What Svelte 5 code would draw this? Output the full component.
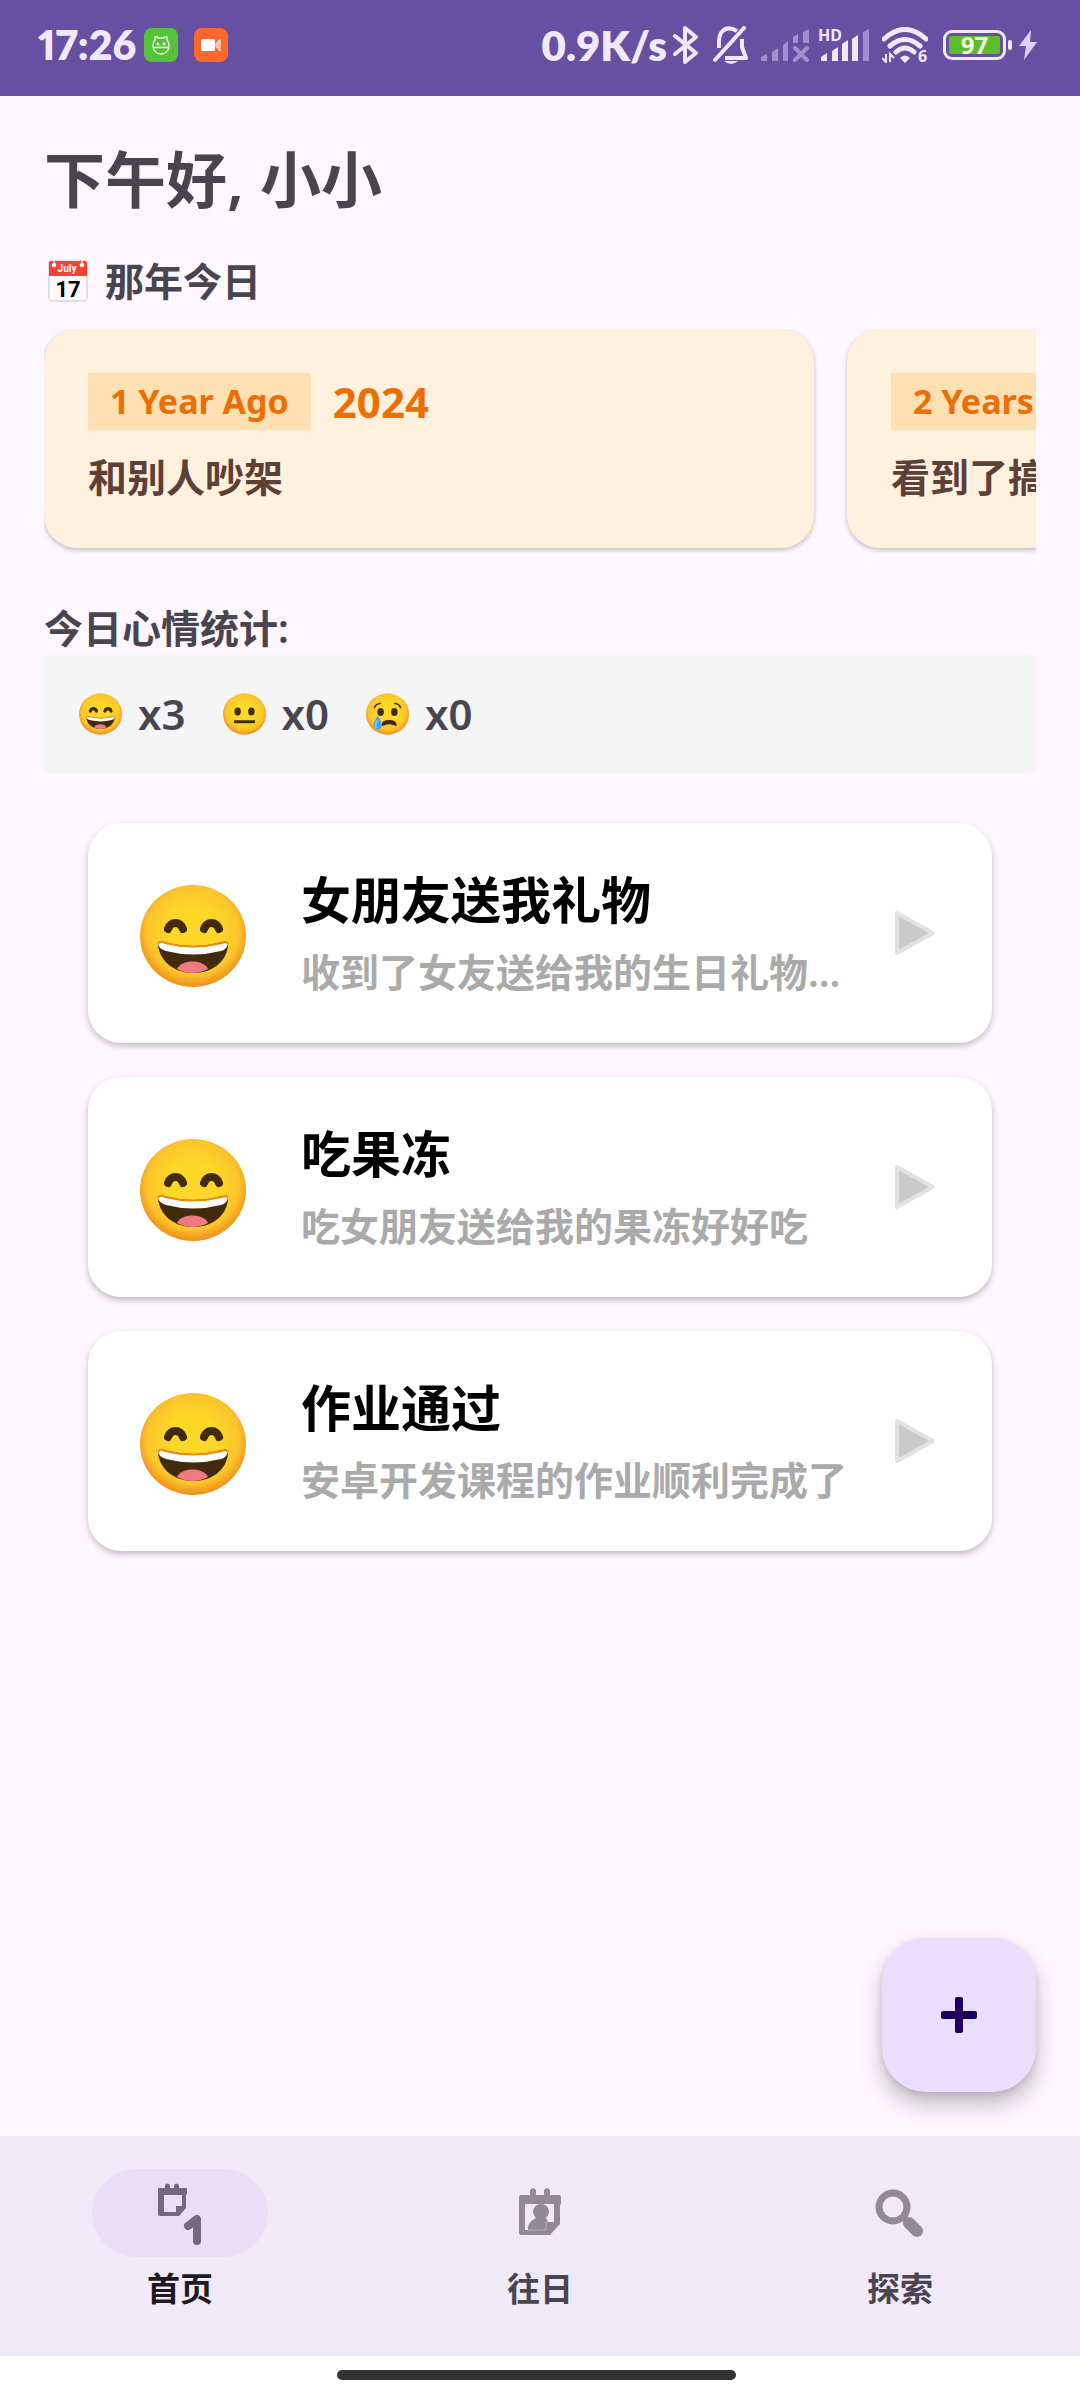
<script>
  const memories = [
    { ago: '1 Year Ago', year: '2024', text: '和别人吵架' },
    { ago: '2 Years Ago', year: '2023', text: '看到了搞笑的视频' }
  ];
  const moods = [
    { kind: 'happy', count: 3, label: '开心' },
    { kind: 'neutral', count: 0, label: '平静' },
    { kind: 'sad', count: 0, label: '难过' }
  ];
  const entries = [
    { title: '女朋友送我礼物', text: '收到了女友送给我的生日礼物…' },
    { title: '吃果冻', text: '吃女朋友送给我的果冻好好吃' },
    { title: '作业通过', text: '安卓开发课程的作业顺利完成了' }
  ];
  const tabs = [
    { id: 'home', label: '首页' },
    { id: 'past', label: '往日' },
    { id: 'search', label: '探索' }
  ];
  let active = $state('home');
</script>

{#snippet face(kind)}
  <svg class="face" viewBox="0 0 106 102" aria-hidden="true">
    <defs>
      <radialGradient id="skin" cx="50%" cy="45%" r="54%">
        <stop offset="0.4" stop-color="#fdd828" />
        <stop offset="0.8" stop-color="#fbc52b" />
        <stop offset="1" stop-color="#f0921c" />
      </radialGradient>
    </defs>
    <ellipse cx="53" cy="51" rx="53" ry="51" fill="url(#skin)" />
    {#if kind === 'happy'}
      <path d="M28 44c3-8 12-8 15 0M64 44c3-8 12-8 15 0" fill="none" stroke="#422b0d" stroke-width="8" stroke-linecap="round" />
      <path d="M18 60q0-5 6-3q29 8 58 0q7-2 6 4c-2 17-17 27-35 27S20 77 18 60z" fill="#422b0d" />
      <path d="M37 84c4-10 27-10 31 0q-15 8-31 0z" fill="#ee7a7f" />
      <path d="M18 59q2-4 7-1q28 7 57 0q5-2 6 1q-2 6-7 7q-28 7-55 0q-7-2-8-7z" fill="#fff" />
      <path d="M18 59q2-4 7-1q28 7 57 0q5-2 6 1" fill="none" stroke="#e88a14" stroke-width="2" />
    {:else if kind === 'neutral'}
      <ellipse cx="36" cy="45" rx="8" ry="10" fill="#422b0d" />
      <ellipse cx="70" cy="45" rx="8" ry="10" fill="#422b0d" />
      <path d="M30 70h46" stroke="#422b0d" stroke-width="7" stroke-linecap="round" />
    {:else}
      <ellipse cx="36" cy="46" rx="8" ry="10" fill="#422b0d" />
      <ellipse cx="70" cy="46" rx="8" ry="10" fill="#422b0d" />
      <path d="M21 35q3-9 14-10M85 35q-3-9-14-10" fill="none" stroke="#422b0d" stroke-width="4" stroke-linecap="round" />
      <path d="M40 79q0-12 17-12t17 12q-17-9-34 0z" fill="#422b0d" stroke="#422b0d" stroke-width="3" stroke-linejoin="round" />
      <path d="M29 55c6 12 11 18 10 25-2 12-18 12-20 0-1-7 4-13 10-25z" fill="#3aa8e8" />
      <path d="M27 68c-4 6-4 12-2 16" fill="none" stroke="#81d4fa" stroke-width="4" stroke-linecap="round" />
    {/if}
  </svg>
{/snippet}

<div class="screen">
  <header class="status">
    <div class="group left">
      <time>17:26</time>
      <svg class="app" viewBox="0 0 34 34" aria-hidden="true">
        <rect width="34" height="34" rx="8" fill="#55c238" />
        <path d="M11 12l0-3q2-1 3 1h6q1-2 3-1v3q2 2 2 6c0 5-4 8-8 8s-8-3-8-8q0-4 2-6zM9 19.500h16" fill="none" stroke="#f2ffe9" stroke-width="1.300" />
        <path d="M14 14l1.500 2-1.500 2-1.500-2zM20 14l1.500 2-1.500 2-1.500-2z" fill="#f2ffe9" />
      </svg>
      <svg class="app second" viewBox="0 0 34 34" aria-hidden="true">
        <rect width="34" height="34" rx="8" fill="#ff672c" />
        <rect x="7" y="11" width="14" height="12" rx="1.500" fill="#fff" />
        <path d="M21 16l4-5h2v12h-2l-4-5z" fill="#ffc3a8" />
      </svg>
    </div>
    <div class="group right">
      <span class="speed">0.9K/s</span>
      <svg class="bt" viewBox="0 0 26 38" aria-hidden="true">
        <path d="M2 10l21 17-11 9V2l11 9L2 28" fill="none" stroke="#f0e9fb" stroke-width="4" stroke-linejoin="round" stroke-linecap="round" />
      </svg>
      <svg class="bell" viewBox="0 0 36 38" aria-hidden="true">
        <path d="M24 5Q14-1 8 7q-2 3-2 8v7M29 13v8l4 11H12" fill="none" stroke="#f0e9fb" stroke-width="4" stroke-linejoin="round" />
        <path d="M2 34L31 2" stroke="#f0e9fb" stroke-width="4" stroke-linecap="round" />
        <path d="M11 35h14q-7 6-14 0z" fill="#f0e9fb" />
      </svg>
      <svg class="sig" viewBox="0 0 48 34" aria-hidden="true">
        <path d="M0 33v-4l6-3v7zM11 33V24l6-4v13zM22 33V17l5-4v20zM32 15V9l5-3v9zM42 15V4l6-3v14z" fill="#a28fcd" />
        <path d="M34 20l12 12M46 20L34 32" stroke="#a28fcd" stroke-width="4" stroke-linecap="round" />
      </svg>
      <div class="hd">
        <span class="tiny">HD</span>
        <svg viewBox="0 0 52 34" aria-hidden="true">
          <path d="M3 33v-4l6-4v8zM14 33V23l6-4v14zM24 33V16l6-4v21zM34 33V11l6-4v26z" fill="#f0e9fb" />
          <path d="M45 33V4l6-3v32z" fill="#a28fcd" />
        </svg>
      </div>
      <div class="wifi">
        <svg viewBox="0 0 46 36" aria-hidden="true">
          <path d="M2 12q21-19 42 0M8 19q15-13 30 0M14 25q9-8 18 0" fill="none" stroke="#f0e9fb" stroke-width="5" stroke-linecap="round" />
          <path d="M18 31q5-5 10 0l-5 5z" fill="#f0e9fb" />
          <path d="M0 31l4 4v-8M8 35v-8l4 4" fill="none" stroke="#f0e9fb" stroke-width="2" />
        </svg>
        <span class="tiny">6</span>
      </div>
      <div class="battery"><span class="level">97</span></div>
      <svg class="bolt" viewBox="0 0 18 30" aria-hidden="true">
        <path d="M12 0L0 16h7L5 30 18 12h-7z" fill="#ddd2f2" />
      </svg>
    </div>
  </header>

  <main>
    <h1>下午好, 小小</h1>

    <h2 class="memory-title">
      <svg viewBox="0 0 40 42" aria-hidden="true">
        <rect x="1" y="1" width="38" height="40" rx="2" fill="#fafafa" stroke="#c4c4c4" />
        <path d="M1 16V3q0-2 2-2h34q2 0 2 2v13z" fill="#f44336" />
        <path d="M6 0v5M34 0v5" stroke="#f5d5d5" stroke-width="1.500" />
        <circle cx="6" cy="5" r="2.300" fill="#fff" /><circle cx="34" cy="5" r="2.300" fill="#fff" />
        <text x="19" y="12" text-anchor="middle" class="month">July</text>
        <text x="20" y="37" text-anchor="middle" class="day">17</text>
      </svg>
      那年今日
    </h2>

    <div class="memories">
      {#each memories as m}
        <article class="memory">
          <div class="memory-head"><span class="chip">{m.ago}</span><span class="year">{m.year}</span></div>
          <p>{m.text}</p>
        </article>
      {/each}
    </div>

    <h2 class="stats-title">今日心情统计:</h2>
    <div class="stats">
      {#each moods as mood}
        <span class="mood" aria-label={mood.label}>{@render face(mood.kind)}x{mood.count}</span>
      {/each}
    </div>

    <div class="entries">
      {#each entries as e}
        <button class="entry">
          {@render face('happy')}
          <span class="entry-text">
            <span class="entry-title">{e.title}</span>
            <span class="entry-sub">{e.text}</span>
          </span>
          <svg class="play" viewBox="0 0 40 44" aria-hidden="true">
            <path d="M2 2l36 20L2 42z" fill="#cacaca" stroke="#e2e2e2" stroke-width="4" stroke-linejoin="round" />
          </svg>
        </button>
      {/each}
    </div>

    <button class="fab" aria-label="添加">
      <svg viewBox="0 0 36 36" aria-hidden="true">
        <rect x="14" width="8" height="36" rx="2" fill="#21005d" />
        <rect y="14" width="36" height="8" rx="2" fill="#21005d" />
      </svg>
    </button>
  </main>

  <nav>
    {#each tabs as tab}
      <button class="tab" class:active={active === tab.id} onclick={() => (active = tab.id)}>
        <span class="pill">
          <svg viewBox="0 0 66 66" aria-hidden="true">
            {#if tab.id === 'home'}
              <path fill="#73697f" fill-rule="evenodd" d="M11 9q0-1 1-1h6V5q2-3 5 0v3h4V5q2-3 5 0v3h7q1 0 1 1v5l-1 1v13l-7 8H13q-2 0-2-2zM17 15v17h12v-6h6V15z" />
              <path d="M41 46l9-7v22" fill="none" stroke="#73697f" stroke-width="8" stroke-linejoin="round" stroke-linecap="round" />
            {:else if tab.id === 'past'}
              <path fill="#918997" fill-rule="evenodd" d="M12 17q0-2 2-2h9V10q3-4 6 0v5h8V10q3-4 6 0v5h9q2 0 2 2v7l-1 1v19L43 55H14q-2 0-2-2zM18 24v26h3c0-7 3-9 8-12a8 8 0 1 1 10 0l2 4h6V24z" />
              <path d="M21 50h18v-8h2" fill="none" stroke="#b6aebd" stroke-width="1" />
            {:else}
              <circle cx="26" cy="27" r="14" fill="none" stroke="#918997" stroke-width="7" />
              <path d="M38 39l3 3" stroke="#918997" stroke-width="6" />
              <path d="M42 43l8 8" stroke="#918997" stroke-width="12" stroke-linecap="round" />
            {/if}
          </svg>
        </span>
        {tab.label}
      </button>
    {/each}
  </nav>
  <footer><span></span></footer>
</div>

<style>
  :global(body) {
    margin: 0;
  }
  .screen {
    min-height: 100vh;
    display: flex;
    flex-direction: column;
    background: #fef7ff;
    color: #49454f;
    font-family: 'Noto Sans', 'Noto Sans CJK SC', sans-serif;
    font-size: 39px;
    font-weight: 600;
  }
  h1, h2, p {
    margin: 0;
  }
  button {
    border: 0;
    padding: 0;
    font: inherit;
    color: inherit;
    background: none;
    text-align: left;
  }
  svg {
    display: block;
    flex: none;
  }
  .status {
    height: 96px;
    padding: 0 43px 6px 38px;
    box-sizing: border-box;
    display: flex;
    align-items: center;
    justify-content: space-between;
    background: #674fa1;
    color: #f0e9fb;
    font-family: Lato, sans-serif;
    font-size: 42px;
    font-weight: 800;
    line-height: 48px;
  }
  .status time {
    font-size: 41px;
    font-variant-numeric: proportional-nums;
  }
  .group {
    display: flex;
    align-items: center;
  }
  .left {
    gap: 8px;
  }
  .app {
    width: 34px;
    height: 34px;
  }
  .second {
    margin-left: 8px;
  }
  .bt {
    width: 26px;
    height: 38px;
    margin: 0 14px 0 6px;
  }
  .bell {
    width: 36px;
    height: 38px;
  }
  .sig {
    width: 48px;
    height: 34px;
    margin-left: 12px;
  }
  .hd {
    position: relative;
    width: 52px;
    margin-left: 9px;
  }
  .hd svg {
    width: 52px;
    height: 34px;
  }
  .wifi {
    position: relative;
    width: 46px;
    margin: 0 15px 0 12px;
  }
  .wifi svg {
    width: 46px;
    height: 36px;
  }
  .tiny {
    position: absolute;
    left: 0;
    top: -4px;
    font: 700 16px/22px 'Noto Sans', sans-serif;
  }
  .wifi .tiny {
    left: 36px;
    top: 18px;
  }
  .battery {
    position: relative;
    box-sizing: border-box;
    width: 63px;
    height: 30px;
    margin-right: 7px;
    padding: 3px;
    border: 3px solid #f0e9fb;
    border-radius: 9px;
  }
  .battery::after {
    content: '';
    position: absolute;
    right: -9px;
    top: 7px;
    width: 4px;
    height: 10px;
    border-radius: 2px;
    background: #f0e9fb;
  }
  .level {
    display: flex;
    align-items: center;
    justify-content: center;
    height: 18px;
    border-radius: 2px;
    background: #5bbd2b;
    color: #f0ffe6;
    font: 700 24px/28px 'Noto Sans', sans-serif;
  }
  .bolt {
    width: 18px;
    height: 30px;
    margin-left: 6px;
  }
  main {
    flex: 1;
    position: relative;
    padding: 44px 44px 0;
  }
  h1 {
    font-size: 61px;
    line-height: 80px;
    font-weight: 600;
  }
  h2 {
    font-size: 39px;
    line-height: 56px;
    font-weight: 600;
  }
  .memory-title {
    display: flex;
    align-items: center;
    gap: 17px;
    margin: 33px 0 20px;
    padding-left: 4px;
    font-weight: 700;
  }
  .memory-title svg {
    width: 40px;
    height: 42px;
  }
  .month {
    font: 700 10px Roboto, sans-serif;
    fill: #fff;
  }
  .day {
    font: 700 22px Roboto, sans-serif;
    fill: #000;
  }
  .memories {
    display: flex;
    gap: 33px;
    overflow: hidden;
    padding-bottom: 11px;
  }
  .memory {
    flex: 0 0 770px;
    box-sizing: border-box;
    padding: 44px;
    border-radius: 33px;
    background: #fff1de;
    box-shadow: 0 2px 5px rgb(0 0 0 / 0.25);
    color: #5d4037;
  }
  .memory-head {
    display: flex;
    align-items: center;
    gap: 22px;
    margin-bottom: 20px;
    color: #ec6f06;
    font-weight: 700;
  }
  .chip {
    padding: 0 22px;
    font-size: 34px;
    font-weight: 700;
    line-height: 57px;
    background: #ffe0b2;
  }
  .year {
    font-size: 42px;
    line-height: 57px;
  }
  .memory p {
    line-height: 54px;
    white-space: nowrap;
  }
  .stats-title {
    margin-top: 42px;
    line-height: 54px;
  }
  .stats {
    display: flex;
    gap: 37px;
    padding: 31px 35px;
    background: #f5f5f5;
    font-size: 42px;
    line-height: 56px;
  }
  .mood {
    display: flex;
    align-items: center;
    gap: 16px;
  }
  .mood .face {
    width: 43px;
    height: 42px;
  }
  .entries {
    display: flex;
    flex-direction: column;
    gap: 34px;
    padding: 50px 44px;
  }
  .entry {
    display: flex;
    align-items: center;
    padding: 36px 57px 36px 52px;
    border-radius: 33px;
    background: #fff;
    box-shadow: 0 3px 6px rgb(0 0 0 / 0.25);
  }
  .entry .face {
    width: 106px;
    height: 102px;
    margin: 6px 55px 0 0;
  }
  .entry-text {
    flex: 1;
    min-width: 0;
    display: flex;
    flex-direction: column;
    padding-top: 4px;
    white-space: nowrap;
  }
  .entry-title {
    color: #000;
    font-size: 50px;
    line-height: 74px;
    font-weight: 700;
  }
  .entry-sub {
    color: #aaa;
    line-height: 70px;
    overflow: hidden;
    text-overflow: ellipsis;
  }
  .play {
    width: 40px;
    height: 44px;
  }
  .fab {
    position: absolute;
    right: 44px;
    bottom: 44px;
    width: 154px;
    height: 154px;
    display: grid;
    place-items: center;
    border-radius: 44px;
    background: #eaddff;
    box-shadow: 0 12px 22px rgb(0 0 0 / 0.25), 0 2px 6px rgb(0 0 0 / 0.1);
  }
  .fab svg {
    width: 36px;
    height: 36px;
  }
  nav {
    position: relative;
    display: grid;
    grid-template-columns: repeat(3, 1fr);
    height: 220px;
    background: #f0eaf8;
  }
  .tab {
    display: flex;
    flex-direction: column;
    align-items: center;
    gap: 10px;
    padding-top: 33px;
    font-size: 33px;
    line-height: 44px;
    font-weight: 700;
  }
  .active {
    color: #1d1b20;
  }
  .pill {
    width: 176px;
    height: 88px;
    display: grid;
    place-items: center;
    border-radius: 44px;
  }
  .active .pill {
    background: #e9def6;
  }
  .pill svg {
    width: 66px;
    height: 66px;
  }
  footer {
    height: 44px;
    display: grid;
    place-items: center;
    padding: 0 8px 6px 0;
    box-sizing: border-box;
    background: #fff;
  }
  footer span {
    width: 399px;
    height: 10px;
    border-radius: 5px;
    background: #333;
  }
</style>
